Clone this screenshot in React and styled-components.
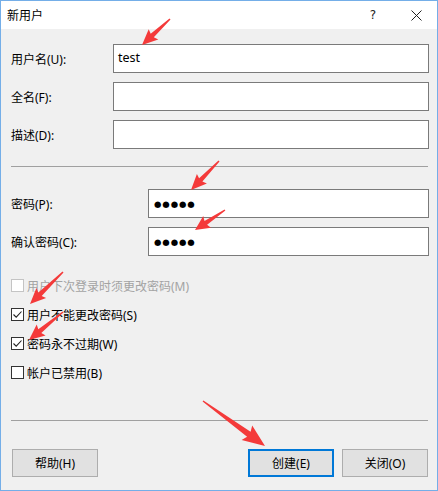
import React from "react";
import styled, { createGlobalStyle } from "styled-components";

const GlobalStyle = createGlobalStyle`
  body {
    margin: 0;
    background: #ffffff;
  }
`;

const Window = styled.div`
  position: relative;
  box-sizing: border-box;
  width: 438px;
  height: 491px;
  border: 1px solid #74aee8;
  background: #f0f0f0;
  display: flex;
  flex-direction: column;
  font-family: "Noto Sans", "Noto Sans CJK SC", sans-serif;
  font-size: 12px;
  color: #000;
  overflow: hidden;
`;

const TitleBar = styled.div`
  height: 28px;
  background: #ffffff;
  display: flex;
  align-items: center;
  padding-left: 6px;
`;

const Title = styled.span`
  font-size: 12px;
`;

const CaptionButtons = styled.div`
  margin-left: auto;
  display: flex;
  height: 100%;
`;

const CaptionButton = styled.div`
  width: ${p => p.w}px;
  height: 100%;
  display: flex;
  align-items: center;
  justify-content: center;
  font-family: "DejaVu Sans", sans-serif;
  font-size: 12px;
  color: #222;
`;

const Body = styled.div`
  flex: 1;
  display: flex;
  flex-direction: column;
  padding: 15px 8px 0 10px;
`;

const FormGrid = styled.div`
  display: grid;
  grid-template-columns: ${p => p.labelWidth}px 1fr;
  row-gap: 9px;
  align-items: center;
  margin-top: ${p => p.top || 0}px;
`;

const Label = styled.label`
  white-space: nowrap;
`;

const Field = styled.div`
  box-sizing: border-box;
  height: 29px;
  border: 1px solid #7a7a7a;
  background: #ffffff;
  display: flex;
  align-items: center;
  padding-left: 4px;
`;

const FieldText = styled.span`
  font-size: 12.5px;
  margin-top: -2px;
`;

const Dots = styled.span`
  font-family: "DejaVu Sans", sans-serif;
  font-size: 8.5px;
  letter-spacing: 0.9px;
  padding-left: 1px;
`;

const Separator = styled.div`
  height: 1px;
  background: #a0a0a0;
  margin: ${p => p.top}px 1px 0 0;
`;

const CheckList = styled.div`
  display: flex;
  flex-direction: column;
  gap: 16px;
  margin-top: 23px;
`;

const CheckRow = styled.div`
  display: flex;
  align-items: center;
  height: 13px;
  gap: 3px;
  color: ${p => (p.disabled ? "#a3a3a3" : "#000")};
`;

const Box = styled.span`
  box-sizing: border-box;
  width: 13px;
  height: 13px;
  border: 1px solid ${p => (p.disabled ? "#c4c4c4" : "#333333")};
  background: #ffffff;
  display: flex;
  align-items: center;
  justify-content: center;
`;

const ButtonRow = styled.div`
  display: flex;
  gap: 8px;
  margin-top: 28px;
  padding: 0 1px 0 1px;
`;

const Button = styled.div`
  box-sizing: border-box;
  width: 86px;
  height: 28px;
  background: #e1e1e1;
  border: ${p => (p.primary ? "2px solid #0078d7" : "1px solid #adadad")};
  display: flex;
  align-items: center;
  justify-content: center;
  margin-left: ${p => (p.push ? "auto" : "0")};
`;

const Overlay = styled.svg`
  position: absolute;
  left: -1px;
  top: -1px;
  pointer-events: none;
`;

function arrowPoints(x1, y1, x2, y2, head, wing) {
  const dx = x2 - x1;
  const dy = y2 - y1;
  const len = Math.hypot(dx, dy);
  const ux = dx / len;
  const uy = dy / len;
  const nx = -uy;
  const ny = ux;
  const neck = len - head;
  const at = (d, w) => [x1 + ux * d + nx * w, y1 + uy * d + ny * w];
  const pts = [
    at(0, 0.7),
    at(neck, wing * 0.33),
    at(neck - head * 0.12, wing),
    at(len, 0),
    at(neck - head * 0.12, -wing),
    at(neck, -wing * 0.33),
    at(0, -0.7),
  ];
  return pts.map(p => p.map(v => v.toFixed(1)).join(",")).join(" ");
}

const arrows = [
  [170, 19, 142, 45, 14, 7],
  [219, 161, 191, 190, 14, 7],
  [225, 210, 195, 230, 13, 7],
  [63, 272, 30, 304, 14, 7],
  [63, 312, 29, 340, 14, 7],
  [203, 401, 265, 446, 20, 9],
];

function Check() {
  return (
    <svg width="11" height="11" viewBox="0 0 11 11">
      <path d="M1.5 5.5 L4.2 8.2 L9.5 2.5" fill="none" stroke="#222" strokeWidth="1.1" />
    </svg>
  );
}

function CheckItem({ checked, disabled, children }) {
  return (
    <CheckRow disabled={disabled}>
      <Box disabled={disabled}>{checked && <Check />}</Box>
      <span>{children}</span>
    </CheckRow>
  );
}

export default function App() {
  return (
    <>
      <GlobalStyle />
      <Window>
        <TitleBar>
          <Title>新用户</Title>
          <CaptionButtons>
            <CaptionButton w={44}>?</CaptionButton>
            <CaptionButton w={42}>
              <svg width="11" height="11" viewBox="0 0 11 11">
                <path d="M0.5 0.5 L10.5 10.5 M10.5 0.5 L0.5 10.5" stroke="#222" strokeWidth="1" />
              </svg>
            </CaptionButton>
          </CaptionButtons>
        </TitleBar>
        <Body>
          <FormGrid labelWidth={102}>
            <Label>用户名(U):</Label>
            <Field><FieldText>test</FieldText></Field>
            <Label>全名(F):</Label>
            <Field />
            <Label>描述(D):</Label>
            <Field />
          </FormGrid>
          <Separator top={17} />
          <FormGrid labelWidth={137} top={22}>
            <Label>密码(P):</Label>
            <Field><Dots>●●●●●</Dots></Field>
            <Label>确认密码(C):</Label>
            <Field><Dots>●●●●●</Dots></Field>
          </FormGrid>
          <CheckList>
            <CheckItem disabled>用户下次登录时须更改密码(M)</CheckItem>
            <CheckItem checked>用户不能更改密码(S)</CheckItem>
            <CheckItem checked>密码永不过期(W)</CheckItem>
            <CheckItem>帐户已禁用(B)</CheckItem>
          </CheckList>
          <Separator top={41} />
          <ButtonRow>
            <Button>帮助(H)</Button>
            <Button primary push>创建(E)</Button>
            <Button>关闭(O)</Button>
          </ButtonRow>
        </Body>
        <Overlay width="438" height="491">
          {arrows.map(([x1, y1, x2, y2, h, w], i) => (
            <polygon key={i} points={arrowPoints(x1, y1, x2, y2, h, w)} fill="#f43a3a" />
          ))}
        </Overlay>
      </Window>
    </>
  );
}
